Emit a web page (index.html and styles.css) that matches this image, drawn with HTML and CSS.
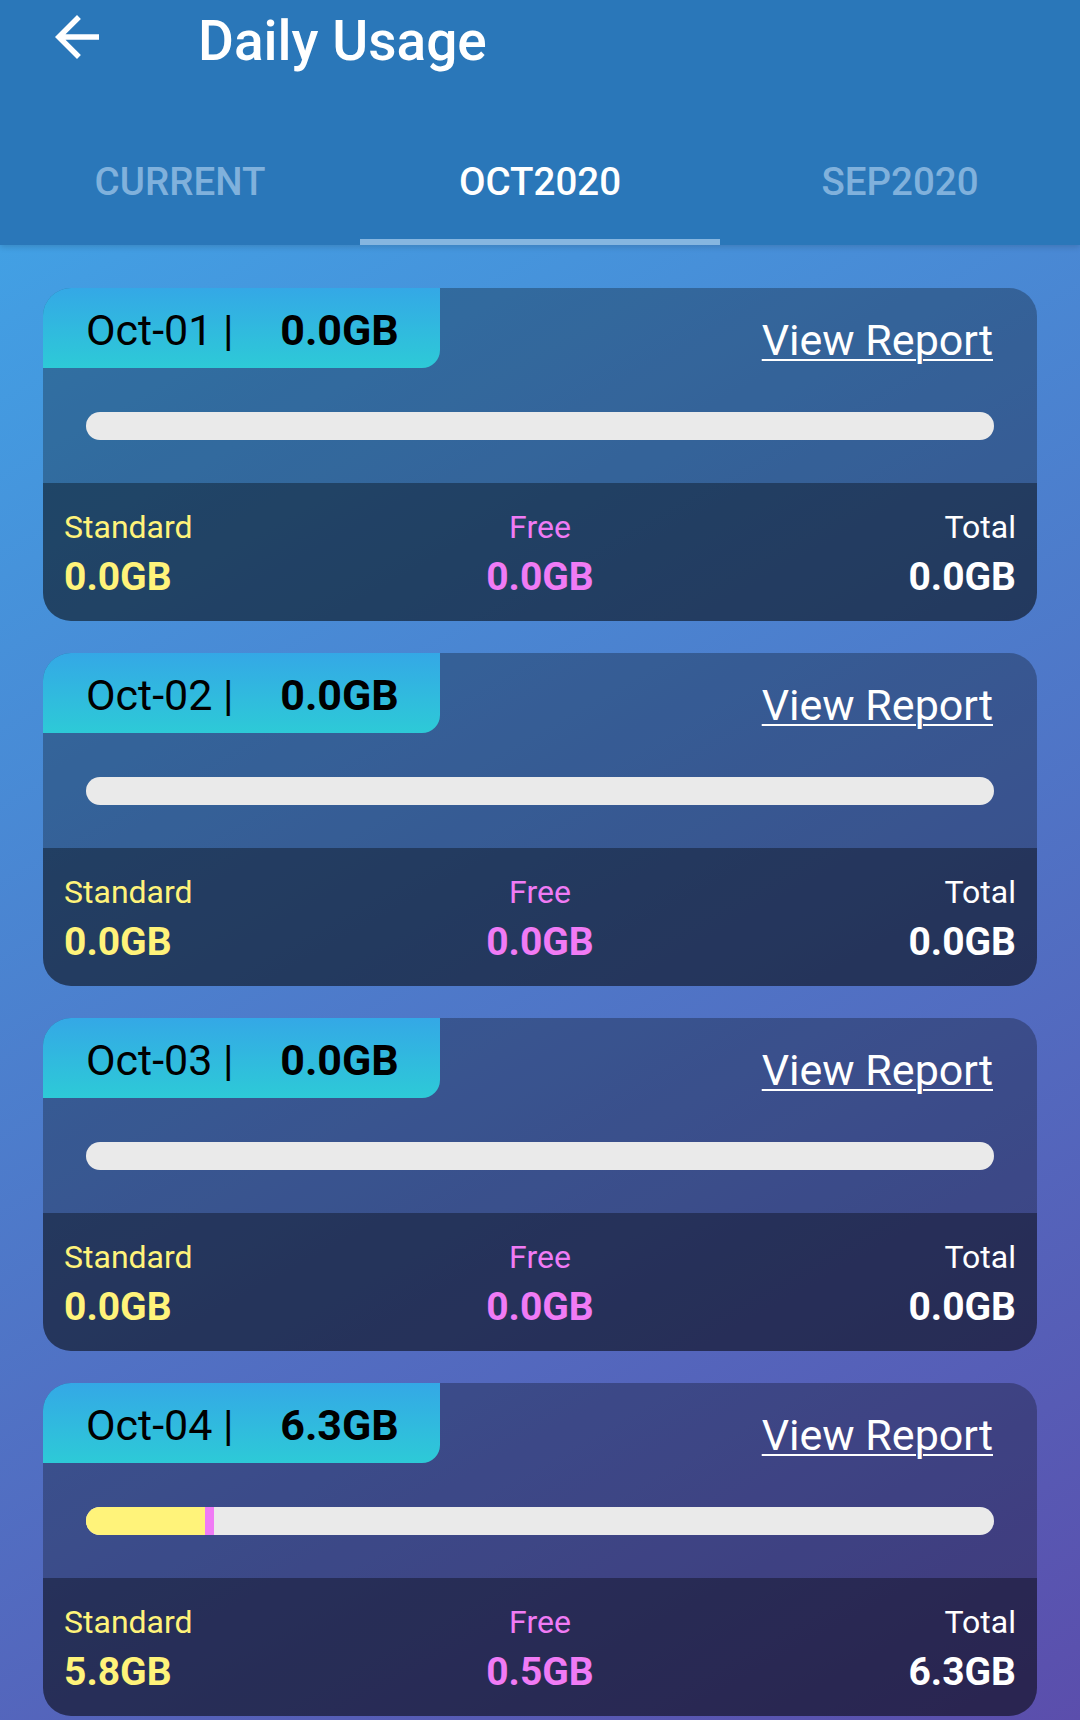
FILE: index.html
```html
<!DOCTYPE html>
<html lang="en">

<head>
    <meta charset="UTF-8">
    <meta name="viewport" content="width=device-width, initial-scale=1.0">
    <title>Daily Usage</title>
    <link rel="stylesheet" href="styles.css">
</head>

<body>
    <header class="app-bar">
        <div class="toolbar">
            <svg class="back-icon" viewBox="0 0 24 24">
                <path d="M20 11H7.83l5.59-5.59L12 4l-8 8 8 8 1.41-1.41L7.83 13H20v-2z" fill="#fff"/>
            </svg>
            <h1 class="title">Daily Usage</h1>
        </div>
        <nav class="tabs">
            <a class="tab">CURRENT</a>
            <a class="tab active">OCT2020</a>
            <a class="tab">SEP2020</a>
        </nav>
    </header>

    <main class="usage-list">
        <div class="day-card">
            <div class="day-top">
                <div class="day-head">
                    <div class="day-tag">Oct-01 | <b>0.0GB</b></div>
                    <a class="report-link">View Report</a>
                </div>
                <div class="bar"></div>
            </div>
            <div class="day-stats">
                <div class="stat std"><span class="stat-label">Standard</span><span class="stat-value">0.0GB</span></div>
                <div class="stat free"><span class="stat-label">Free</span><span class="stat-value">0.0GB</span></div>
                <div class="stat total"><span class="stat-label">Total</span><span class="stat-value">0.0GB</span></div>
            </div>
        </div>

        <div class="day-card">
            <div class="day-top">
                <div class="day-head">
                    <div class="day-tag">Oct-02 | <b>0.0GB</b></div>
                    <a class="report-link">View Report</a>
                </div>
                <div class="bar"></div>
            </div>
            <div class="day-stats">
                <div class="stat std"><span class="stat-label">Standard</span><span class="stat-value">0.0GB</span></div>
                <div class="stat free"><span class="stat-label">Free</span><span class="stat-value">0.0GB</span></div>
                <div class="stat total"><span class="stat-label">Total</span><span class="stat-value">0.0GB</span></div>
            </div>
        </div>

        <div class="day-card">
            <div class="day-top">
                <div class="day-head">
                    <div class="day-tag">Oct-03 | <b>0.0GB</b></div>
                    <a class="report-link">View Report</a>
                </div>
                <div class="bar"></div>
            </div>
            <div class="day-stats">
                <div class="stat std"><span class="stat-label">Standard</span><span class="stat-value">0.0GB</span></div>
                <div class="stat free"><span class="stat-label">Free</span><span class="stat-value">0.0GB</span></div>
                <div class="stat total"><span class="stat-label">Total</span><span class="stat-value">0.0GB</span></div>
            </div>
        </div>

        <div class="day-card">
            <div class="day-top">
                <div class="day-head">
                    <div class="day-tag">Oct-04 | <b>6.3GB</b></div>
                    <a class="report-link">View Report</a>
                </div>
                <div class="bar">
                    <span class="bar-std" style="width: 13.1%;"></span>
                    <span class="bar-free" style="width: 1%;"></span>
                </div>
            </div>
            <div class="day-stats">
                <div class="stat std"><span class="stat-label">Standard</span><span class="stat-value">5.8GB</span></div>
                <div class="stat free"><span class="stat-label">Free</span><span class="stat-value">0.5GB</span></div>
                <div class="stat total"><span class="stat-label">Total</span><span class="stat-value">6.3GB</span></div>
            </div>
        </div>
    </main>
</body>

</html>
```

FILE: styles.css
```css
* {
    margin: 0;
    padding: 0;
    box-sizing: border-box;
    font-family: Roboto, "Liberation Sans", sans-serif;
}

body {
    width: 1080px;
    height: 1720px;
    overflow: hidden;
    background-color: #4a78cc;
}

.app-bar {
    position: relative;
    z-index: 1;
    height: 245px;
    background-color: #2a77b9;
    box-shadow: 0 2px 6px rgba(0, 0, 0, 0.15);
}

.toolbar {
    display: flex;
    align-items: flex-start;
    height: 113px;
}

.back-icon {
    width: 66px;
    height: 66px;
    margin-left: 44px;
    margin-top: 4px;
}

.title {
    color: white;
    font-size: 55px;
    font-weight: 500;
    line-height: 64px;
    margin-left: 88px;
    padding-top: 9px;
}

.tabs {
    display: flex;
    height: 132px;
}

.tab {
    flex: 1;
    display: flex;
    align-items: center;
    justify-content: center;
    padding-top: 10px;
    color: #80b1dc;
    font-size: 38.5px;
    font-weight: 500;
    text-decoration: none;
    border-bottom: 6px solid transparent;
}

.tab.active {
    color: white;
    border-bottom-color: #86b6e0;
}

.usage-list {
    height: 1475px;
    padding: 43px 43px 0 43px;
    display: flex;
    flex-direction: column;
    gap: 32px;
    background: linear-gradient(151deg, #42a0e4 0%, #5b4eac 100%);
}

.day-card {
    flex-shrink: 0;
    border-radius: 28px;
    overflow: hidden;
    background-color: rgba(0, 0, 0, 0.28);
}

.day-top {
    height: 195px;
}

.day-head {
    display: flex;
    justify-content: space-between;
    align-items: flex-start;
}

.day-tag {
    width: 397px;
    height: 80px;
    padding: 4px 0 0 43px;
    line-height: 76px;
    font-size: 43px;
    color: #000;
    background: linear-gradient(to bottom, #34a8e6, #2dcad7);
    border-bottom-right-radius: 18px;
    white-space: nowrap;
}

.day-tag b {
    font-weight: 700;
    margin-left: 36px;
}

.report-link {
    margin-top: 27px;
    margin-right: 44px;
    color: white;
    font-size: 43px;
    line-height: 50px;
    text-decoration: underline;
    text-decoration-thickness: 2px;
    text-underline-offset: 4px;
}

.bar {
    display: flex;
    height: 28px;
    margin: 44px 43px 0 43px;
    border-radius: 14px;
    background-color: #eaeaea;
    overflow: hidden;
}

.bar-std {
    background-color: #fff37a;
}

.bar-free {
    background-color: #f07bf5;
}

.day-stats {
    display: grid;
    grid-template-columns: 1fr 1fr 1fr;
    height: 138px;
    padding: 25px 21px 0 21px;
    background-color: rgba(0, 0, 0, 0.35);
}

.stat {
    display: flex;
    flex-direction: column;
}

.stat-label {
    font-size: 32px;
    line-height: 38px;
}

.stat-value {
    font-size: 39px;
    font-weight: 700;
    line-height: 44px;
    margin-top: 9px;
}

.std {
    align-items: flex-start;
    color: #fff37a;
}

.free {
    align-items: center;
    color: #f07bf5;
}

.total {
    align-items: flex-end;
    color: white;
}
```
